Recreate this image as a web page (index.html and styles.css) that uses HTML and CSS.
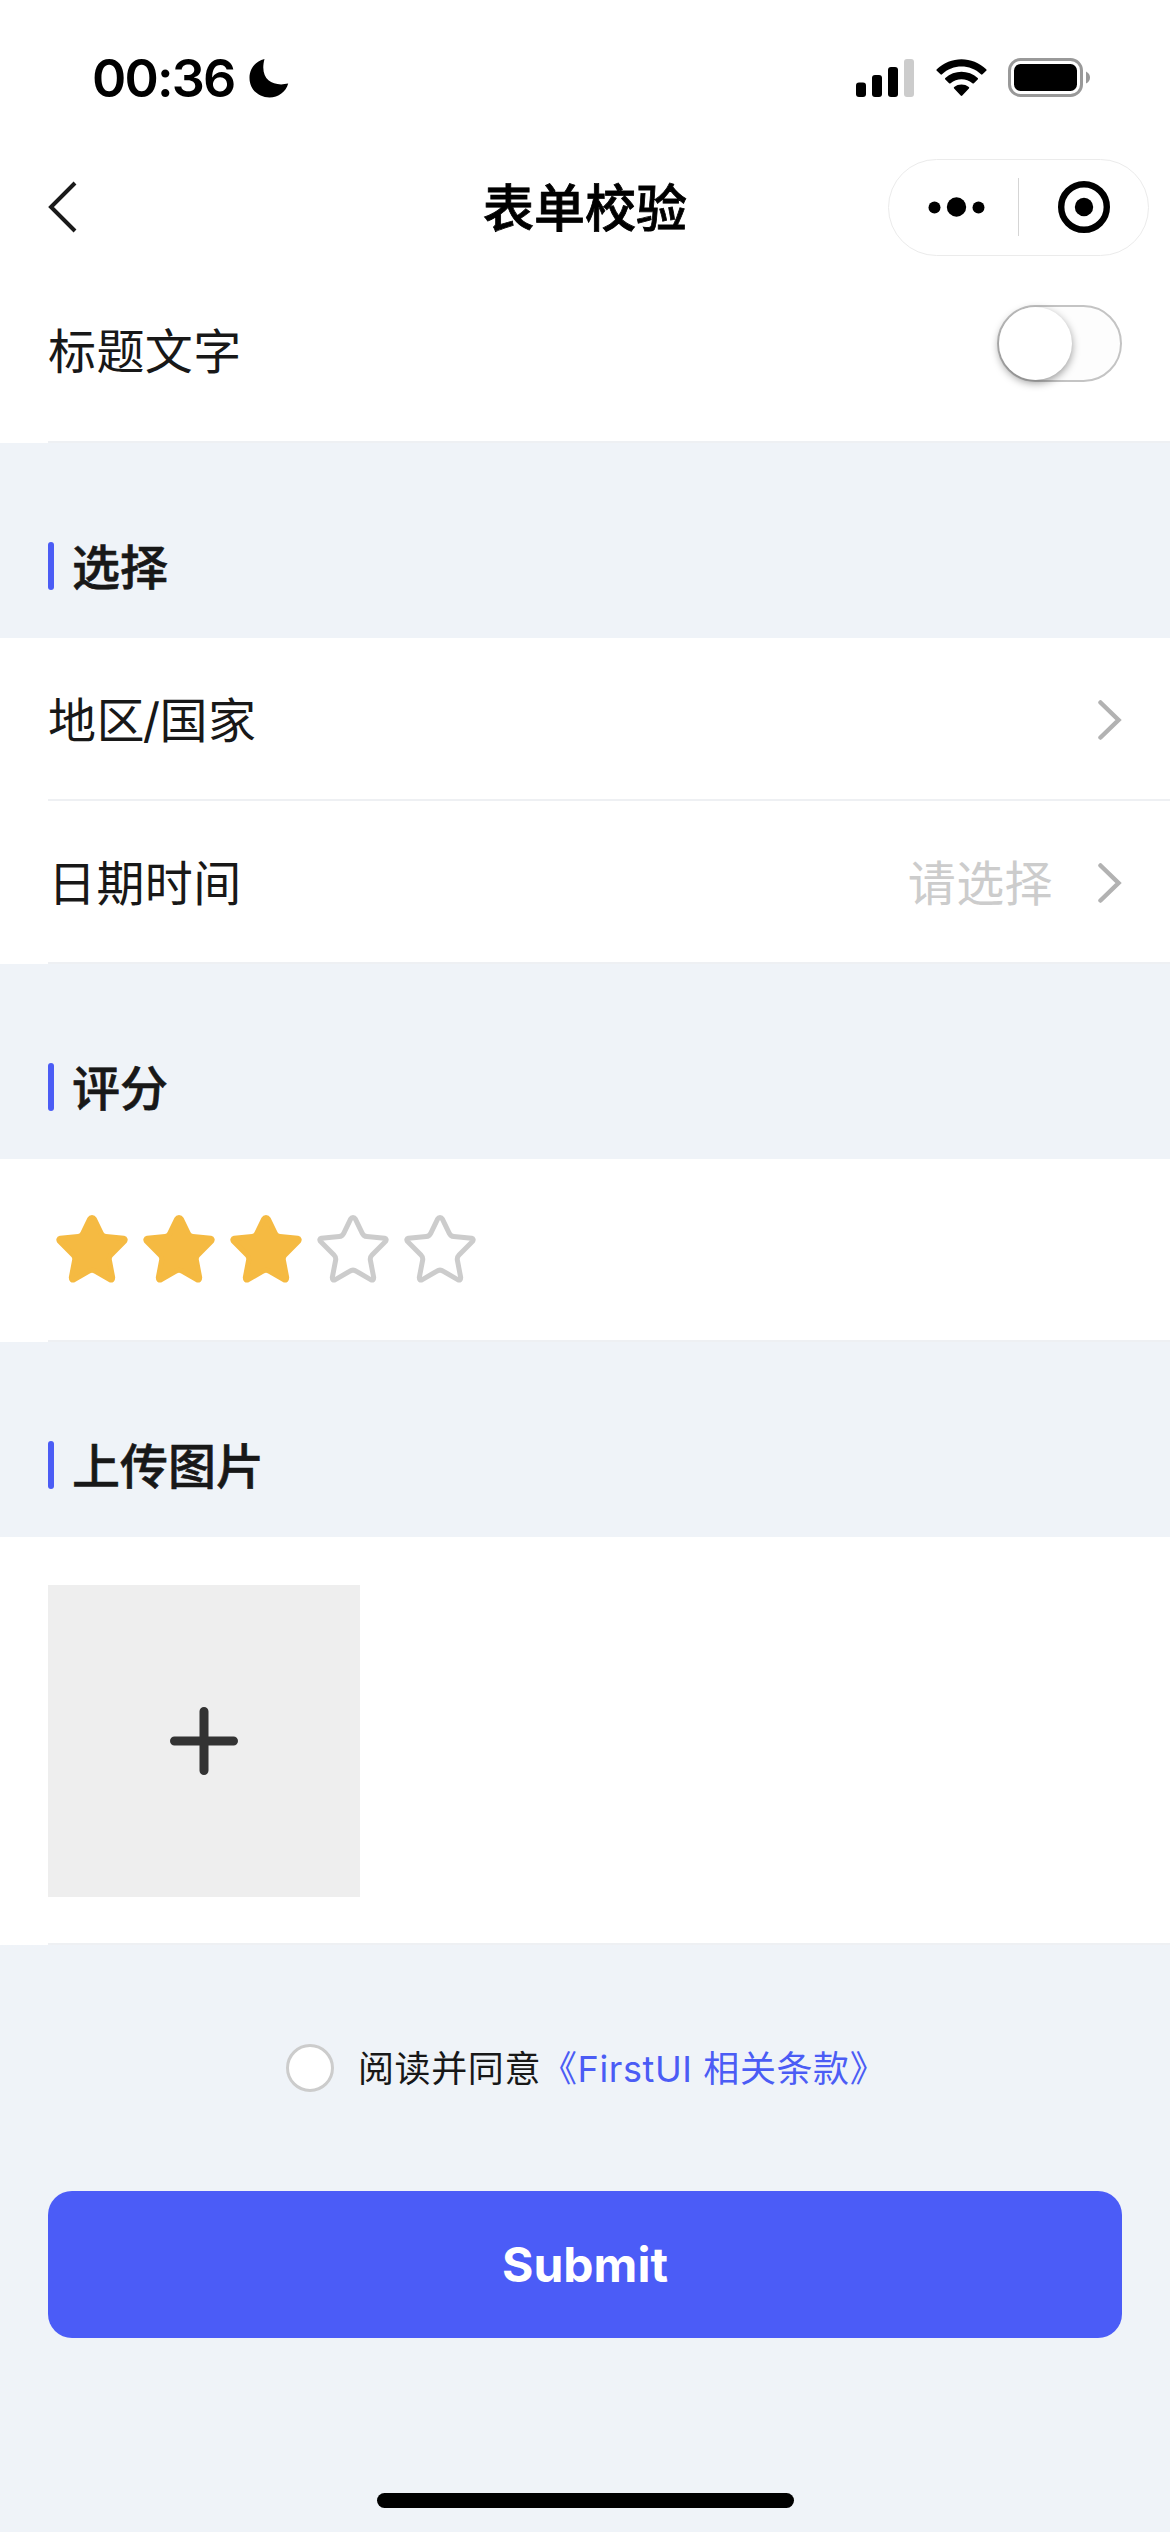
FILE: index.html
```html
<!DOCTYPE html>
<html lang="zh-CN">
<head>
<meta charset="utf-8">
<title>表单校验</title>
<link rel="stylesheet" href="styles.css">
</head>
<body>
<header class="status">
  <span class="time">00:36</span>
  <svg class="moon" width="40" height="40" viewBox="0 0 40 40"><path d="M15.5 1C10 22 24 29 39.2 25.6C37 34 29.500 39.500 20.500 39.500C9 39.500 0.500 31 0.500 20C0.500 11 6 3.500 15.500 1Z"/></svg>
  <svg class="signal" width="58" height="38" viewBox="0 0 58 38"><rect y="23.500" width="10" height="14.500" rx="3"/><rect x="16" y="16" width="10" height="22" rx="3"/><rect x="32" y="8" width="10" height="30" rx="3"/><rect x="48" width="10" height="38" rx="3" fill="#ccc"/></svg>
  <svg class="wifi" width="51" height="38" viewBox="0 0 51 38"><path d="M0.800 10.200C14.500 -3.200 36.500 -3.200 50.200 10.200Q51 11 50.200 11.800L46.500 15.300Q45.800 16 45 15.300C34 5 17 5 6 15.300Q5.200 16 4.500 15.300L0.800 11.800Q0 11 0.800 10.200Z"/><path d="M9.300 19C18.400 10.700 32.600 10.700 41.700 19Q42.500 19.800 41.700 20.600L37.900 24.300Q37.200 24.900 36.400 24.300C30.200 18.900 20.800 18.900 14.600 24.300Q13.800 24.900 13.100 24.300L9.300 20.600Q8.500 19.800 9.300 19Z"/><path d="M18.200 28C22.300 24.700 28.700 24.700 32.800 28Q33.700 28.800 32.900 29.600L26.300 36.600Q25.500 37.400 24.700 36.600L18.100 29.600Q17.300 28.800 18.200 28Z"/></svg>
  <svg class="battery" width="83" height="39" viewBox="0 0 83 39"><rect x="1.500" y="1.500" width="72" height="36" rx="11" fill="none" stroke="#999" stroke-width="3"/><rect x="6" y="6" width="63" height="27" rx="6.500"/><path d="M78 13.500Q82 15.500 82 19.500T78 25.500Z" fill="#999"/></svg>
</header>
<nav class="nav">
  <svg class="back" width="30" height="52" viewBox="0 0 30 52"><path d="M27 2L3 26L27 50" fill="none" stroke="#1a1a1a" stroke-width="4"/></svg>
  <h1 class="nav-title">表单校验</h1>
  <div class="capsule">
    <svg width="129" height="94" viewBox="0 0 129 94"><circle cx="45.500" cy="47.500" r="6"/><circle cx="67.500" cy="47" r="9.700"/><circle cx="89.500" cy="47.500" r="6"/></svg>
    <i class="capsule-line"></i>
    <svg width="129" height="94" viewBox="0 0 129 94"><circle cx="65" cy="47" r="22.800" fill="none" stroke="#000" stroke-width="6.400"/><circle cx="65" cy="47" r="9.200"/></svg>
  </div>
</nav>
<main>
  <section class="row row-switch"><span class="label">标题文字</span><span class="switch"><i class="knob"></i></span></section>
  <h2 class="heading"><span>选择</span></h2>
  <section class="row"><span class="label">地区<span class="slash">/</span>国家</span><svg class="arrow" width="24" height="40" viewBox="0 0 24 40"><path d="M2.500 2.500L20.500 20L2.500 37.500"/></svg></section>
  <section class="row"><span class="label">日期时间</span><span class="hint">请选择</span><svg class="arrow" width="24" height="40" viewBox="0 0 24 40"><path d="M2.500 2.500L20.500 20L2.500 37.500"/></svg></section>
  <h2 class="heading"><span>评分</span></h2>
  <section class="row row-rate">
    <svg width="436" height="72" viewBox="0 0 436 72">
      <defs><path id="star" d="M36 4.500Q37.500 4.500 38.300 6L45.300 20.300Q46.700 23.200 49.800 23.500L67.500 25.200Q70.300 26 68.500 28.400L55 42Q53 44 53.300 46.800L56.700 64.500Q56.700 67.800 54 66.800L39.500 58.300Q36 56 32.500 58.300L18 66.800Q15.300 67.800 15.300 64.500L18.700 46.800Q19 44 17 42L3.500 28.400Q1.700 26 4.500 25.200L22.200 23.500Q25.300 23.200 26.700 20.300L33.700 6Q34.500 4.500 36 4.500Z"/></defs>
      <g class="star-on"><use href="#star" x="0"/><use href="#star" x="87"/><use href="#star" x="174"/></g>
      <g class="star-off"><use href="#star" x="261"/><use href="#star" x="348"/></g>
    </svg>
  </section>
  <h2 class="heading"><span>上传图片</span></h2>
  <section class="row row-upload"><div class="upload"><svg width="68" height="68" viewBox="0 0 68 68"><path d="M34 4.500V63.500M4.500 34H63.500" stroke="#333" stroke-width="9" stroke-linecap="round"/></svg></div></section>
  <div class="agree"><i class="radio"></i><span class="agree-text">阅读并同意</span><a class="link">《FirstUI 相关条款》</a></div>
  <button class="submit">Submit</button>
</main>
<i class="home"></i>
</body>
</html>
```
FILE: styles.css
```css
* { box-sizing: border-box; }
body {
  margin: 0;
  width: 1170px;
  height: 2532px;
  overflow: hidden;
  display: flex;
  flex-direction: column;
  background: #eff3f8;
  color: #181818;
  font-family: Inter, "Noto Sans CJK SC", sans-serif;
}
svg { display: block; flex: none; }
.status {
  height: 141px;
  flex: none;
  display: flex;
  align-items: flex-start;
  padding: 58px 79px 0 92px;
  background: #fff;
}
.time {
  width: 157px;
  height: 40px;
  line-height: 41px;
  font-size: 52px;
  font-weight: 600;
  letter-spacing: -1.8px;
  color: #000;
  white-space: nowrap;
}
.signal { margin: 1px 0 0 567px; }
.wifi { margin: 1px 0 0 22px; }
.battery { margin-left: 21px; }
.nav {
  height: 132px;
  flex: none;
  display: grid;
  grid-template-columns: 1fr auto 1fr;
  align-items: center;
  padding: 0 21px 0 48px;
  background: #fff;
}
.nav-title {
  margin: 3px 0 0 -27px;
  font-size: 51px;
  line-height: 60px;
  font-weight: 500;
  -webkit-text-stroke: .8px #000;
  color: #000;
}
.capsule {
  justify-self: end;
  width: 261px;
  height: 97px;
  display: flex;
  align-items: center;
  border: 1.5px solid #ebebeb;
  border-radius: 49px;
}
.capsule-line { width: 1px; height: 58px; background: #d5d5d5; flex: none; }
main { display: flex; flex-direction: column; }
.row {
  height: 163px;
  display: flex;
  align-items: center;
  padding: 0 48px;
  background: linear-gradient(#eef0f3, #eef0f3) 48px 100% / 100% 2px no-repeat #fff;
}
.row-switch { height: 170px; padding-bottom: 29px; }
.label, .hint {
  padding-top: 2px;
  font-size: 48px;
  line-height: 60px;
  letter-spacing: .4px;
}
.label { flex: 1; }
.row-switch .label { padding-top: 16px; }
.slash { margin: 0 -1px 0 -2px; }
.hint { color: #ccc; margin-right: 45px; }
.arrow { fill: none; stroke: #b2b2b2; stroke-width: 4.500; stroke-linecap: round; }
.switch {
  width: 125px;
  height: 77px;
  border: 2px solid #c4c4c4;
  border-radius: 39px;
  background: #fdfdfd;
}
.knob {
  display: block;
  width: 73px;
  height: 73px;
  border-radius: 50%;
  background: #fff;
  box-shadow: 0 3px 8px rgba(0, 0, 0, .4);
}
.heading {
  height: 195px;
  margin: 0;
  padding: 51px 48px 0;
  display: flex;
  align-items: center;
  gap: 18px;
  font-size: 48px;
  line-height: 60px;
  font-weight: 500;
  -webkit-text-stroke: .6px #181818;
}
.heading span { padding-top: 3px; }
.heading::before {
  content: "";
  width: 6px;
  height: 48px;
  border-radius: 3px;
  background: #4b5cf5;
}
.row-rate { height: 183px; padding: 0 56px 3px; }
.star-on { fill: #f5ba42; stroke: #f5ba42; stroke-width: 5; }
.star-off { fill: none; stroke: #ccc; stroke-width: 5; }
.row-upload { height: 408px; }
.upload {
  width: 312px;
  height: 312px;
  display: grid;
  place-items: center;
  background: #eee;
}
.agree {
  height: 48px;
  margin-top: 99px;
  padding-left: 286px;
  display: flex;
  align-items: center;
  font-size: 36px;
  line-height: 48px;
  letter-spacing: .6px;
  white-space: nowrap;
}
.agree-text, .link { padding-top: 2px; }
.radio {
  width: 48px;
  height: 48px;
  margin-right: 24px;
  border: 3px solid #ccc;
  border-radius: 50%;
  background: #fff;
}
.link { color: #4b5cf5; }
.submit {
  height: 147px;
  margin: 99px 48px 0;
  padding: 0;
  border: 0;
  border-radius: 24px;
  background: #4b5cf7;
  color: #fff;
  font: 700 48px/60px Inter, sans-serif;
}
.home {
  width: 417px;
  height: 15px;
  margin: auto auto 24px 377px;
  border-radius: 8px;
  background: #000;
}
```
